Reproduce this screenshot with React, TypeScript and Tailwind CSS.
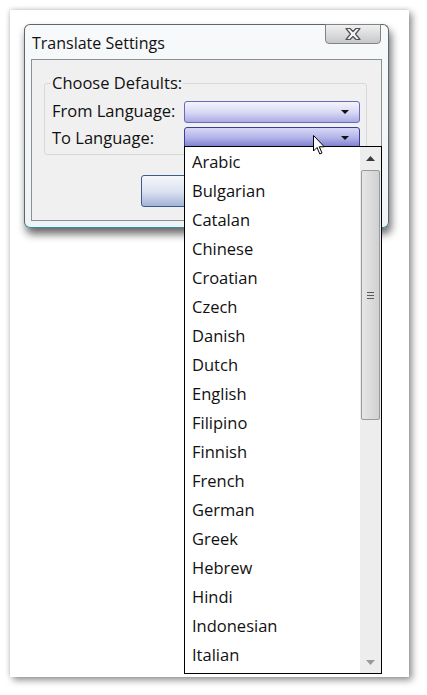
const languages = [
  'Arabic',
  'Bulgarian',
  'Catalan',
  'Chinese',
  'Croatian',
  'Czech',
  'Danish',
  'Dutch',
  'English',
  'Filipino',
  'Finnish',
  'French',
  'German',
  'Greek',
  'Hebrew',
  'Hindi',
  'Indonesian',
  'Italian',
];

function Caret() {
  return (
    <svg width="8" height="4" viewBox="0 0 8 4">
      <path d="M0 0 H8 L4 4 Z" fill="#111" />
    </svg>
  );
}

function Select({ hot = false }: { hot?: boolean }) {
  return (
    <div
      className={`flex h-[22px] w-[176px] items-center justify-end rounded-[3px] border pr-[10px] ${
        hot
          ? 'border-[#3c3c9a] bg-gradient-to-b from-[#d8d8f6] via-[#b2b2e8] to-[#7676cc]'
          : 'border-[#6a6ab8] bg-gradient-to-b from-[#f4f4fc] via-[#dadaf6] to-[#acace4]'
      }`}
    >
      <Caret />
    </div>
  );
}

function Cursor() {
  return (
    <svg width="13" height="20" viewBox="0 0 13 20">
      <path
        d="M0.5 0.5 V16 L4 12.5 L6.8 19 L9 18 L6.3 11.8 H11.3 Z"
        fill="#fff"
        stroke="#000"
        strokeWidth="1"
        strokeLinejoin="round"
      />
    </svg>
  );
}

function CloseGlyph() {
  return (
    <svg width="20" height="14" viewBox="0 0 20 14">
      <path
        d="M3 1.5 H7 L10 4.5 L13 1.5 H17 L12.5 7 L17 12.5 H13 L10 9.5 L7 12.5 H3 L7.5 7 Z"
        fill="#f6f6f6"
        stroke="#4e5256"
        strokeWidth="1.2"
        strokeLinejoin="round"
      />
    </svg>
  );
}

export default function App() {
  return (
    <div
      className="relative h-[695px] w-[427px] overflow-hidden bg-white pl-[10px] pt-[10px] text-[#111]"
      style={{ fontFamily: '"Open Sans", "Noto Sans", sans-serif' }}
    >
      {/* screenshot page */}
      <div className="h-[667px] w-[399px] bg-white p-[14px] shadow-[3px_3px_7px_rgba(0,0,0,0.45),-1px_-1px_4px_rgba(0,0,0,0.12)]">
        {/* dialog window */}
        <div className="relative flex h-[204px] w-[365px] flex-col rounded-[6px] border border-[#5c666c] border-b-[#2f8fa0] bg-gradient-to-b from-[#f7f9fa] to-[#eef4f6] shadow-[2px_6px_8px_rgba(0,0,0,0.6)]">
          <div className="flex h-[34px] items-center pl-[7px] pt-[1px] text-[16px]">Translate Settings</div>
          <div className="absolute right-[7px] top-[-1px] flex h-[20px] w-[56px] items-center justify-center rounded-b-[4px] border border-[#7d858a] bg-gradient-to-b from-[#f0f0f0] via-[#dcdcdc] to-[#c6c8ca]">
            <CloseGlyph />
          </div>
          {/* content panel */}
          <div className="mx-[6px] h-[162px] border border-[#8c9092] bg-[#f0f0f0] px-[12px] pt-[23px]">
            <div className="relative h-[72px] w-[323px] rounded-[3px] border border-[#d8d8d8] pl-[7px] pt-[14px]">
              <div className="absolute left-[6px] top-[-12px] bg-[#f0f0f0] px-[1px] text-[16.5px] leading-[22px]">
                Choose Defaults:
              </div>
              <div className="flex h-[27px] items-center justify-between pr-[6px] text-[16.5px]">
                <span>From Language:</span>
                <Select />
              </div>
              <div className="flex h-[26px] items-center justify-between pr-[6px] text-[16.5px]">
                <span>To Language:</span>
                <Select hot />
              </div>
            </div>
            <div className="ml-[97px] mt-[20px] h-[32px] w-[90px] rounded-[3px] border border-[#3c5a8c] bg-gradient-to-b from-[#f4f6fa] via-[#dde4f0] to-[#a4b4d8]" />
          </div>
        </div>
      </div>

      {/* dropped-down list */}
      <div className="absolute left-[184px] top-[146px] flex h-[528px] w-[198px] border border-black bg-white">
        <div className="flex-1 pt-[1px]">
          {languages.map((l) => (
            <div key={l} className="flex h-[29px] items-center pl-[7px] text-[16.5px]">
              {l}
            </div>
          ))}
        </div>
        <div className="flex w-[21px] flex-col bg-[#ededed]">
          <div className="flex h-[23px] items-center justify-center">
            <svg width="9" height="5" viewBox="0 0 9 5">
              <path d="M0 5 H9 L4.5 0 Z" fill="#3a3a3a" />
            </svg>
          </div>
          <div className="mx-[1px] flex h-[250px] items-center justify-center rounded-[2px] border border-[#9a9a9a] bg-gradient-to-r from-[#e6e6e6] via-[#dcdcdc] to-[#cfd0d2]">
            <div className="flex flex-col gap-[2px]">
              <div className="h-px w-[7px] bg-[#5a5a5a]" />
              <div className="h-px w-[7px] bg-[#5a5a5a]" />
              <div className="h-px w-[7px] bg-[#5a5a5a]" />
            </div>
          </div>
          <div className="flex-1" />
          <div className="flex h-[22px] items-center justify-center">
            <svg width="9" height="5" viewBox="0 0 9 5">
              <path d="M0 0 H9 L4.5 5 Z" fill="#9a9a9a" />
            </svg>
          </div>
        </div>
      </div>

      {/* mouse pointer */}
      <div className="absolute left-[313px] top-[135px]">
        <Cursor />
      </div>
    </div>
  );
}
